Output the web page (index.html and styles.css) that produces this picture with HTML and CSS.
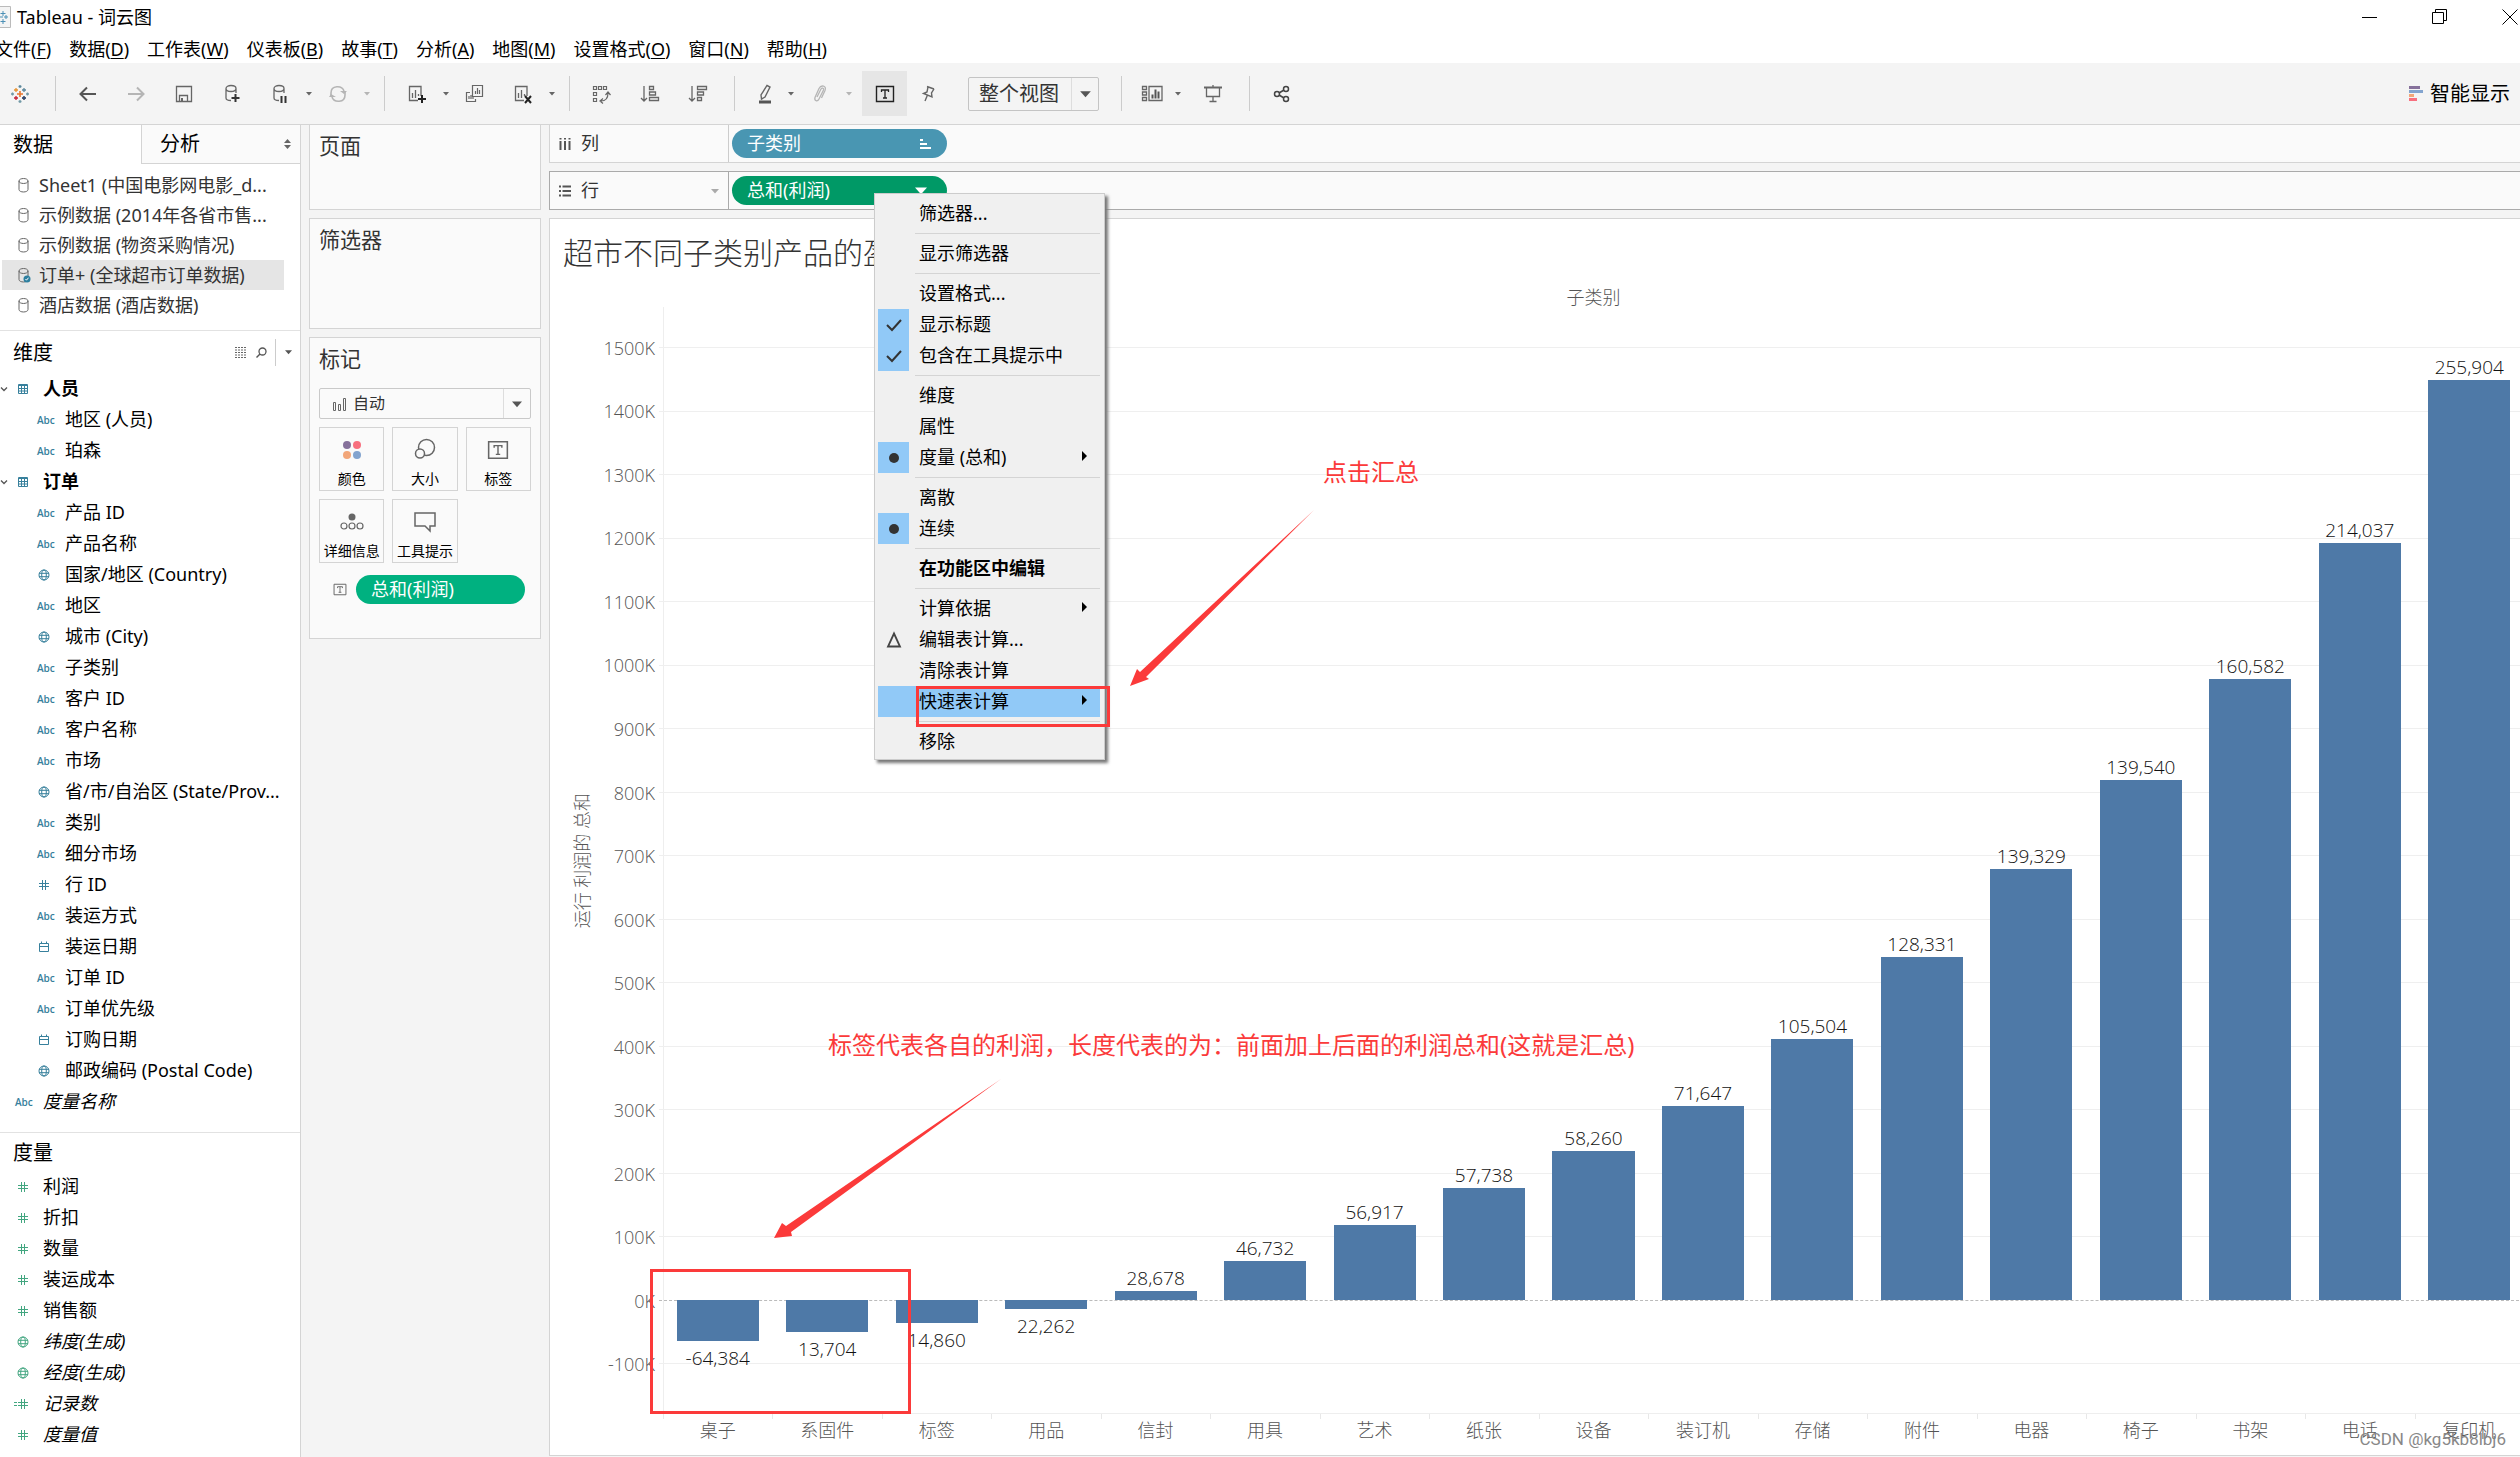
FILE: index.html
```html
<!DOCTYPE html>
<html lang="zh-CN">
<head>
<meta charset="utf-8">
<title>Tableau - 词云图</title>
<link rel="stylesheet" href="styles.css">
</head>
<body>
<svg class="defs" aria-hidden="true">
  <symbol id="db" viewBox="0 0 14 16"><path d="M2 4v8.500c0 3.300 9 3.300 9 0V4M2 4c0-3.300 9-3.300 9 0s-9 3.300-9 0z" fill="none" stroke="#666"/></symbol>
  <symbol id="caret" viewBox="0 0 8 6"><path d="M0 1h8L4 5.500z" fill="currentColor"/></symbol>
  <symbol id="globe" viewBox="0 0 12 12"><g fill="none" stroke="currentColor"><circle cx="6" cy="6" r="5"/><ellipse cx="6" cy="6" rx="2.300" ry="5"/><path d="M1 4.300h10M1 7.700h10"/></g></symbol>
  <symbol id="hash" viewBox="0 0 12 12"><path d="M4.500 1v10M7.500 1v10M1 4.500h10M1 7.500h10" fill="none" stroke="currentColor"/></symbol>
  <symbol id="cal" viewBox="0 0 12 12"><path d="M1.500 2.500h9v8h-9zM1.500 5.500h9M3.500 .500v2M8.500 .500v2" fill="none" stroke="currentColor"/></symbol>
  <symbol id="table" viewBox="0 0 12 12"><path d="M1.500 1.500h9v9h-9zM1.500 2.500h9M1.500 5.500h9M1.500 8h9M4.500 2v8M7.500 2v8" fill="none" stroke="currentColor"/></symbol>
  <symbol id="chev" viewBox="0 0 8 8"><path d="M1 2.500l3 3 3-3" fill="none" stroke="#555" stroke-width="1.300"/></symbol>
  <symbol id="tbox" viewBox="0 0 20 18"><path d="M1.500 1.500h17v15h-17z" fill="none" stroke="currentColor" stroke-width="1.400"/><path d="M6.500 7V5h7v2M10 5v8M8 13h4" fill="none" stroke="currentColor" stroke-width="1.300"/></symbol>
  <symbol id="check" viewBox="0 0 16 14"><path d="M1 7l5 5 9-10" fill="none" stroke="#333" stroke-width="2"/></symbol>
  <symbol id="right" viewBox="0 0 6 10"><path d="M0 0l5 5-5 5z" fill="#000"/></symbol>
  <symbol id="sheet" viewBox="0 0 20 20"><path d="M14 12V2.500H2.500v14H11M5.500 14V9M8.500 14V6M11.500 12v-2" fill="none" stroke="#666" stroke-width="1.300"/></symbol>
</svg>

<header class="titlebar">
  <svg class="appicon" width="20" height="22" viewBox="0 0 20 22"><path d="M0 .5h18.500v21H0" fill="#f4f4f4" stroke="#bbb"/><path d="M11 5v5M8.500 7.500h5M4 11h7M7.500 8v6M14 9v4M12 11h4M11 13v5M8.500 15.500h5" stroke="#4a8fb5" fill="none"/></svg>
  <span class="apptitle">Tableau - 词云图</span>
  <button class="win" aria-label="最小化"><svg width="16" height="16"><path d="M0 8.500h15" stroke="#000"/></svg></button>
  <button class="win" aria-label="还原"><svg width="16" height="16"><path d="M.5 3.500h11v11H.5zM3.500 3.500v-3h11v11h-3" stroke="#000" fill="none"/></svg></button>
  <button class="win" aria-label="关闭"><svg width="16" height="16"><path d="M.5 .5l15 15M15.500 .5l-15 15" stroke="#000"/></svg></button>
</header>

<nav class="menubar">
  <button>文件(<u>F</u>)</button><button>数据(<u>D</u>)</button><button>工作表(<u>W</u>)</button><button>仪表板(<u>B</u>)</button><button>故事(<u>T</u>)</button><button>分析(<u>A</u>)</button><button>地图(<u>M</u>)</button><button>设置格式(<u>O</u>)</button><button>窗口(<u>N</u>)</button><button>帮助(<u>H</u>)</button>
</nav>

<div class="toolbar" role="toolbar">
  <button class="tb logo" aria-label="开始页面"><svg width="18" height="18" viewBox="0 0 18 18" fill="none" stroke-width="1.300"><path d="M9 6v6M6 9h6" stroke="#e8762d" stroke-width="1.600"/><path d="M5 3v4M3 5h4M13 11v4M11 13h4" stroke="#e8912d"/><path d="M5 11v4M3 13h4" stroke="#c72035"/><path d="M13 3v4M11 5h4M9 0v3M7.500 1.500h3" stroke="#5b879b"/><path d="M13 11v4M11 13h4" stroke="#1f457e"/><path d="M9 15v3M7.500 16.500h3M1.500 7.500v3M0 9h3M16.500 7.500v3M15 9h3" stroke="#7199a6"/></svg></button>
  <i class="sep"></i>
  <button class="tb" aria-label="撤消"><svg width="18" height="16"><path d="M17 8H2M8 1.500L1.500 8 8 14.500" fill="none" stroke="#555" stroke-width="2"/></svg></button>
  <button class="tb" aria-label="重做"><svg width="18" height="16"><path d="M1 8h15M10 1.500L16.500 8 10 14.500" fill="none" stroke="#b5b5b5" stroke-width="2"/></svg></button>
  <button class="tb" aria-label="保存"><svg width="18" height="18"><path d="M1.500 1.500h15v15h-15zM4.500 16v-5.500h8V16" fill="none" stroke="#666" stroke-width="1.300"/><path d="M6 13h2v3H6z" fill="#666"/></svg></button>
  <button class="tb" aria-label="新建数据源"><svg width="18" height="20"><path d="M3 4.500v9.500c0 2 2 2.500 5 2.500M3 4.500c0-4 10-4 10 0s-10 4-10 0zM13 4.500V9" fill="none" stroke="#666" stroke-width="1.300"/><path d="M12.500 10v8M8.500 14h8" stroke="#333" stroke-width="2"/></svg></button>
  <button class="tb" aria-label="暂停自动更新"><svg width="18" height="20"><path d="M3 4.500v9.500c0 2 2 2.500 5 2.500M3 4.500c0-4 10-4 10 0s-10 4-10 0zM13 4.500V9" fill="none" stroke="#666" stroke-width="1.300"/><path d="M10.500 12v7M14.500 12v7" stroke="#333" stroke-width="2"/></svg></button>
  <button class="dd" aria-label="更多"><svg><use href="#caret"/></svg></button>
  <button class="tb off" aria-label="运行更新"><svg width="20" height="18"><path d="M3 11V8c0-8 11-8 13-2M17 7v3c0 8-11 8-13 2" fill="none" stroke="#b5b5b5" stroke-width="1.600"/><path d="M12 6h7l-3 3zM1 12h7l-5-3z" fill="#b5b5b5"/></svg></button>
  <button class="dd off" aria-label="更多"><svg><use href="#caret"/></svg></button>
  <i class="sep"></i>
  <button class="tb" aria-label="新建工作表"><svg width="20" height="20"><use href="#sheet"/><path d="M15 11v8M11 15h8" stroke="#222" stroke-width="2"/></svg></button>
  <button class="dd" aria-label="更多"><svg><use href="#caret"/></svg></button>
  <button class="tb" aria-label="复制"><svg width="20" height="20"><path d="M7.500 1.500h10v11h-10zM10.500 10V7M12.500 10V4M14.500 10V6M5 8.500H1.500v9h9V15M4 15v-3M6 15v-4M8 15v-2" fill="none" stroke="#666" stroke-width="1.200"/></svg></button>
  <button class="tb" aria-label="清除工作表"><svg width="20" height="20"><use href="#sheet"/><path d="M12 12l6 7M18 12l-6 7" stroke="#222" stroke-width="2"/></svg></button>
  <button class="dd" aria-label="更多"><svg><use href="#caret"/></svg></button>
  <i class="sep"></i>
  <button class="tb" aria-label="交换行和列"><svg width="20" height="20"><path d="M1.500 2.500h3v3h-3zM6.500 2.500h3v3h-3zM11.500 2.500h3v3h-3zM1.500 8.500h3v3h-3zM1.500 14.500h3v3h-3zM9 17c5 0 7-3 7-8M13.500 11L16 8l2.500 3M11 14.500L8 17l3 2.500" fill="none" stroke="#666" stroke-width="1.200"/></svg></button>
  <button class="tb" aria-label="升序排序"><svg width="20" height="18"><path d="M4 1v15M1 13l3 3 3-3M9.500 1.500h4v3h-4zM9.500 7h6v3h-6zM9.500 12.500h9v3h-9z" fill="none" stroke="#666" stroke-width="1.300"/></svg></button>
  <button class="tb" aria-label="降序排序"><svg width="20" height="18"><path d="M4 1v15M1 13l3 3 3-3M9.500 1.500h9v3h-9zM9.500 7h6v3h-6zM9.500 12.500h4v3h-4z" fill="none" stroke="#666" stroke-width="1.300"/></svg></button>
  <i class="sep"></i>
  <button class="tb narrow" aria-label="突出显示"><svg width="16" height="20"><path d="M10 1.500l3 1.500-5 10-3.500 2L4 11z" fill="none" stroke="#666" stroke-width="1.400"/><path d="M2 18h12" stroke="#555" stroke-width="3"/></svg></button>
  <button class="dd" aria-label="更多"><svg><use href="#caret"/></svg></button>
  <button class="tb" aria-label="组成员"><svg width="16" height="18"><path d="M5 12l4-8c1-1.500 3-1 2.500 1L7 14c-1.500 3-5 2-4-1.500L7 3.500c2-4 8-3 6 2L9.500 13" fill="none" stroke="#b5b5b5" stroke-width="1.300"/></svg></button>
  <button class="dd off" aria-label="更多"><svg><use href="#caret"/></svg></button>
  <button class="tb on" aria-label="显示标记标签"><svg width="20" height="18"><use href="#tbox"/></svg></button>
  <button class="tb narrow" aria-label="固定轴"><svg width="16" height="18"><path d="M6 1.500l7 2.500M7 2l-1 5-3.500 1.500L11 12l-.5-4L13 4M6.500 10L4 16" fill="none" stroke="#666" stroke-width="1.400"/></svg></button>
  <label class="fit"><select aria-label="适合"><option>整个视图</option></select><span><svg width="11" height="8"><use href="#caret"/></svg></span></label>
  <i class="sep wide"></i>
  <button class="tb narrow" aria-label="显示/隐藏卡"><svg width="22" height="18"><path d="M1.500 1.500h4v3h-4zM1.500 7h4v3h-4zM1.500 12.500h4v3h-4zM8 1.500h13v14H8z" fill="none" stroke="#666" stroke-width="1.300"/><path d="M11.500 13.500v-4M14.500 13.500v-9M17.500 13.500v-7" stroke="#555" stroke-width="2"/></svg></button>
  <button class="dd gap" aria-label="更多"><svg><use href="#caret"/></svg></button>
  <button class="tb" aria-label="演示模式"><svg width="18" height="18"><path d="M2.500 2.500v9h13v-9M9 11.500V16M5.500 16.500h7M9 0v2" fill="none" stroke="#666" stroke-width="1.300"/><path d="M0 2.500h18" stroke="#666" stroke-width="2"/></svg></button>
  <i class="sep"></i>
  <button class="tb" aria-label="共享"><svg width="18" height="18"><g fill="none" stroke="#444" stroke-width="1.500"><circle cx="4" cy="9" r="2.500"/><circle cx="13" cy="4" r="2.500"/><circle cx="13" cy="14" r="2.500"/><path d="M6 8l5-3M6 10l5 3"/></g></svg></button>
  <button class="showme"><svg width="14" height="15"><path d="M0 0h11v3H0z" fill="#86719b"/><path d="M0 4h14v3H0z" fill="#83a4cf"/><path d="M0 8h5v3H0z" fill="#f2a679"/><path d="M0 12h8v3H0z" fill="#f8707f"/></svg>智能显示</button>
</div>

<div class="work">
  <aside class="data">
    <div class="tabs"><button class="tab cur">数据</button><button class="tab">分析<svg width="7" height="10"><path d="M0 4l3.500-4L7 4zM0 6l3.500 4L7 6z" fill="#666"/></svg></button></div>
    <ul class="sources">
      <li><svg><use href="#db"/></svg>Sheet1 (中国电影网电影_d...</li>
      <li><svg><use href="#db"/></svg>示例数据 (2014年各省市售...</li>
      <li><svg><use href="#db"/></svg>示例数据 (物资采购情况)</li>
      <li class="sel"><svg><use href="#db"/><circle cx="10" cy="12" r="3.500" fill="#2d7f9f"/><path d="M8.500 12l1 1.200 2-2.500" fill="none" stroke="#fff"/></svg>订单+ (全球超市订单数据)</li>
      <li><svg><use href="#db"/></svg>酒店数据 (酒店数据)</li>
    </ul>
    <div class="fieldhead">
      <h2>维度</h2>
      <svg width="12" height="11"><path d="M0 .5h12M0 3h12M0 5.500h12M0 8h12M0 10.500h12" stroke="#666" stroke-dasharray="2 1"/></svg>
      <svg width="11" height="11"><circle cx="6.500" cy="4.500" r="3.500" fill="none" stroke="#555" stroke-width="1.300"/><path d="M4 7l-3.500 3.500" stroke="#555" stroke-width="1.500"/></svg>
      <i></i>
      <svg width="7" height="6"><use href="#caret"/></svg>
    </div>
    <ul class="tree dims">
      <li class="group"><svg class="chev"><use href="#chev"/></svg><svg class="ic"><use href="#table"/></svg>人员</li>
      <li class="child"><span class="abc">Abc</span>地区 (人员)</li>
      <li class="child"><span class="abc">Abc</span>珀森</li>
      <li class="group"><svg class="chev"><use href="#chev"/></svg><svg class="ic"><use href="#table"/></svg>订单</li>
      <li class="child"><span class="abc">Abc</span>产品 ID</li>
      <li class="child"><span class="abc">Abc</span>产品名称</li>
      <li class="child"><svg class="ic"><use href="#globe"/></svg>国家/地区 (Country)</li>
      <li class="child"><span class="abc">Abc</span>地区</li>
      <li class="child"><svg class="ic"><use href="#globe"/></svg>城市 (City)</li>
      <li class="child"><span class="abc">Abc</span>子类别</li>
      <li class="child"><span class="abc">Abc</span>客户 ID</li>
      <li class="child"><span class="abc">Abc</span>客户名称</li>
      <li class="child"><span class="abc">Abc</span>市场</li>
      <li class="child"><svg class="ic"><use href="#globe"/></svg>省/市/自治区 (State/Prov...</li>
      <li class="child"><span class="abc">Abc</span>类别</li>
      <li class="child"><span class="abc">Abc</span>细分市场</li>
      <li class="child"><svg class="ic"><use href="#hash"/></svg>行 ID</li>
      <li class="child"><span class="abc">Abc</span>装运方式</li>
      <li class="child"><svg class="ic"><use href="#cal"/></svg>装运日期</li>
      <li class="child"><span class="abc">Abc</span>订单 ID</li>
      <li class="child"><span class="abc">Abc</span>订单优先级</li>
      <li class="child"><svg class="ic"><use href="#cal"/></svg>订购日期</li>
      <li class="child"><svg class="ic"><use href="#globe"/></svg>邮政编码 (Postal Code)</li>
      <li class="gen"><span class="abc">Abc</span>度量名称</li>
    </ul>
    <div class="fieldhead meas"><h2>度量</h2></div>
    <ul class="tree green">
      <li><svg class="ic"><use href="#hash"/></svg>利润</li>
      <li><svg class="ic"><use href="#hash"/></svg>折扣</li>
      <li><svg class="ic"><use href="#hash"/></svg>数量</li>
      <li><svg class="ic"><use href="#hash"/></svg>装运成本</li>
      <li><svg class="ic"><use href="#hash"/></svg>销售额</li>
      <li class="gen"><svg class="ic"><use href="#globe"/></svg>纬度(生成)</li>
      <li class="gen"><svg class="ic"><use href="#globe"/></svg>经度(生成)</li>
      <li class="gen"><svg class="ic"><path d="M-3 4.500h3M-3 7.500h3" stroke="currentColor"/><use href="#hash"/></svg>记录数</li>
      <li class="gen"><svg class="ic"><use href="#hash"/></svg>度量值</li>
    </ul>
  </aside>

  <section class="cards">
    <div class="card pages"><h3>页面</h3></div>
    <div class="card filters"><h3>筛选器</h3></div>
    <div class="card marks">
      <h3>标记</h3>
      <label class="marktype"><svg width="14" height="14"><path d="M.5 5.500h2v8h-2zM5.500 7.500h2v6h-2zM10.500 1.500h2v12h-2z" fill="none" stroke="#666"/></svg><select aria-label="标记类型"><option>自动</option></select><span><svg width="10" height="8"><use href="#caret"/></svg></span></label>
      <div class="props">
        <button><svg width="20" height="20"><circle cx="5" cy="5" r="4" fill="#86719b"/><circle cx="15" cy="5" r="4" fill="#f8707f"/><circle cx="5" cy="15" r="4" fill="#f2a679"/><circle cx="15" cy="15" r="4" fill="#83a4cf"/></svg>颜色</button>
        <button><svg width="22" height="22"><g stroke="#666" stroke-width="1.500"><circle cx="12.500" cy="9.500" r="8" fill="none"/><circle cx="6" cy="15.500" r="4.500" fill="#fafafa"/></g></svg>大小</button>
        <button><svg width="22" height="20"><use href="#tbox"/></svg>标签</button>
        <button><svg width="24" height="20"><circle cx="12" cy="5" r="3.500" fill="#666"/><g fill="none" stroke="#666" stroke-width="1.200"><circle cx="4" cy="14" r="3"/><circle cx="12" cy="14" r="3"/><circle cx="20" cy="14" r="3"/></g></svg>详细信息</button>
        <button><svg width="22" height="20"><path d="M1 1h20v13h-5v5l-5-5H1z" fill="none" stroke="#666" stroke-width="1.500"/></svg>工具提示</button>
      </div>
      <div class="markpill"><svg width="14" height="13"><use href="#tbox"/></svg><button class="pill label">总和(利润)</button></div>
    </div>
  </section>

  <main class="view">
    <div class="shelf">
      <div class="shelfname"><svg width="12" height="14"><path d="M1.500 1v1.500M6 1v1.500M10.500 1v1.500M1.500 4v9M6 4v9M10.500 4v9" stroke="#555" stroke-width="2"/></svg>列</div>
      <button class="pill blue">子类别<svg width="12" height="10"><path d="M1 0v2M0 1h3M0 5h7M0 9h11" stroke="#fff" stroke-width="2"/></svg></button>
    </div>
    <div class="shelf active">
      <div class="shelfname"><svg width="12" height="12"><path d="M0 1.500h2M3.500 1.500H12M0 6h2M3.500 6H12M0 10.500h2M3.500 10.500H12" stroke="#555" stroke-width="2"/></svg>行<svg class="more" width="8" height="6"><use href="#caret"/></svg></div>
      <button class="pill green2">总和(利润)<svg width="12" height="9"><use href="#caret"/></svg></button>
    </div>
    <div class="viz">
      <h1>超市不同子类别产品的盈</h1>
      <div class="chart">
        <div class="colhead">子类别</div>
        <div class="ytitle"><span>运行 利润的 总和</span></div>
        <div class="yaxis">
          <div class="top"></div><div>1500K</div><div>1400K</div><div>1300K</div><div>1200K</div><div>1100K</div><div>1000K</div><div>900K</div><div>800K</div><div>700K</div><div>600K</div><div>500K</div><div>400K</div><div>300K</div><div>200K</div><div>100K</div><div>0K</div><div class="bottom">-100K</div>
        </div>
        <div class="lines">
          <div class="top"></div><div></div><div></div><div></div><div></div><div></div><div></div><div></div><div></div><div></div><div></div><div></div><div></div><div></div><div></div><div></div><div class="zero"></div><div class="bottom"></div>
        </div>
        <div class="bars">
          <div class="pad"></div>
          <div class="neg"><i style="height:36%"></i>-64,384</div>
          <div class="neg"><i style="height:28.300%"></i>13,704</div>
          <div class="neg"><i style="height:20%"></i>14,860</div>
          <div class="neg"><i style="height:7.600%"></i>22,262</div>
          <div class="pos">28,678<i style="height:0.966%"></i></div>
          <div class="pos">46,732<i style="height:3.952%"></i></div>
          <div class="pos">56,917<i style="height:7.588%"></i></div>
          <div class="pos">57,738<i style="height:11.277%"></i></div>
          <div class="pos">58,260<i style="height:15%"></i></div>
          <div class="pos">71,647<i style="height:19.577%"></i></div>
          <div class="pos">105,504<i style="height:26.318%"></i></div>
          <div class="pos">128,331<i style="height:34.517%"></i></div>
          <div class="pos">139,329<i style="height:43.418%"></i></div>
          <div class="pos">139,540<i style="height:52.333%"></i></div>
          <div class="pos">160,582<i style="height:62.593%"></i></div>
          <div class="pos">214,037<i style="height:76.267%"></i></div>
          <div class="pos">255,904<i style="height:92.617%"></i></div>
        </div>
        <div class="xaxis"><span>桌子</span><span>系固件</span><span>标签</span><span>用品</span><span>信封</span><span>用具</span><span>艺术</span><span>纸张</span><span>设备</span><span>装订机</span><span>存储</span><span>附件</span><span>电器</span><span>椅子</span><span>书架</span><span>电话</span><span>复印机</span></div>
      </div>
    </div>
  </main>
</div>

<div class="ctx" role="menu">
  <button>筛选器...</button>
  <hr>
  <button>显示筛选器</button>
  <hr>
  <button>设置格式...</button>
  <button><span class="mk"><svg width="16" height="14"><use href="#check"/></svg></span>显示标题</button>
  <button><span class="mk"><svg width="16" height="14"><use href="#check"/></svg></span>包含在工具提示中</button>
  <hr>
  <button>维度</button>
  <button>属性</button>
  <button><span class="mk"><svg width="10" height="10"><circle cx="5" cy="5" r="5" fill="#333"/></svg></span>度量 (总和)<svg class="sub"><use href="#right"/></svg></button>
  <hr>
  <button>离散</button>
  <button><span class="mk"><svg width="10" height="10"><circle cx="5" cy="5" r="5" fill="#333"/></svg></span>连续</button>
  <hr>
  <button class="bold">在功能区中编辑</button>
  <hr>
  <button>计算依据<svg class="sub"><use href="#right"/></svg></button>
  <button><span class="mk plain"><svg width="16" height="16"><path d="M8 1.500l6 13H2z" fill="none" stroke="#444" stroke-width="1.800"/></svg></span>编辑表计算...</button>
  <button>清除表计算</button>
  <button class="hot">快速表计算<svg class="sub"><use href="#right"/></svg></button>
  <hr>
  <button>移除</button>
</div>

<div class="note box1"></div>
<div class="note box2"></div>
<p class="note text1">点击汇总</p>
<p class="note text2">标签代表各自的利润，长度代表的为：前面加上后面的利润总和(这就是汇总)</p>
<svg class="note arrow1" width="186" height="178"><path d="M184 0L16 167l3 2-19 7 7-17 3 3z" fill="#fb3a3a"/></svg>
<svg class="note arrow2" width="228" height="161"><path d="M227 0L17 153l1 4-18 2 8-15 4 3z" fill="#fb3a3a"/></svg>
<div class="watermark">CSDN @kg5kb8lbj6</div>
</body>
</html>
```
FILE: styles.css
```css
* { box-sizing: border-box; }
html, body { margin: 0; height: 100%; }
body {
  position: relative;
  display: flex;
  flex-direction: column;
  overflow: hidden;
  background: #f4f4f4;
  color: #000;
  font: 18px/31px "Noto Sans", "Noto Sans CJK SC", sans-serif;
}
button, select { font: inherit; color: inherit; border: 0; padding: 0; background: none; white-space: nowrap; }
select { appearance: none; outline: 0; }
h1, h2, h3, p, ul { margin: 0; padding: 0; font-weight: 400; list-style: none; }
svg { flex: none; overflow: visible; }
.defs { position: absolute; width: 0; height: 0; }

/* Title and menu bars */
.titlebar { display: flex; align-items: center; height: 34px; background: #fff; }
.appicon { margin-left: -8px; }
.apptitle { flex: 1; padding-left: 5px; }
.win { width: 70px; height: 32px; display: flex; align-items: center; justify-content: center; flex: none; }
.win:last-child { margin-right: -25px; }
.menubar { display: flex; gap: 18px; height: 29px; padding-bottom: 1px; margin-left: -5px; background: #fff; }
.menubar button { line-height: 30px; }
.menubar u { text-underline-offset: 2px; text-decoration-thickness: 1px; }

/* Toolbar */
.toolbar { display: flex; align-items: center; height: 61px; flex: none; color: #666; }
.tb { width: 48px; height: 45px; display: flex; align-items: center; justify-content: center; flex: none; }
.tb.logo { width: 40px; }
.tb.narrow { width: 43px; }
.tb.on { width: 45px; margin-left: 8px; background: #e6e6e6; color: #222; }
.dd { width: 10px; height: 45px; display: flex; align-items: center; justify-content: center; flex: none; }
.dd svg { width: 6px; height: 5px; }
.dd.off { color: #b5b5b5; }
.dd.gap { margin-right: 6px; }
.sep { width: 1px; height: 35px; background: #ccc; margin: 0 8px 0 12px; flex: none; }
.logo + .sep { margin-left: 15px; }
.sep.wide { margin-left: 22px; }
.fit { display: flex; width: 131px; height: 34px; margin-left: 18px; border: 1px solid #c4c4c4; border-radius: 2px; font-size: 20px; color: #333; flex: none; }
.fit select { flex: 1; min-width: 0; padding-left: 10px; }
.fit span, .marktype span { width: 27px; border-left: 1px solid #ddd; display: flex; align-items: center; justify-content: center; color: #555; }
.showme { display: flex; align-items: center; gap: 7px; margin-left: auto; padding-right: 10px; font-size: 20px; color: #000; }

/* Workspace */
.work { flex: 1; min-height: 0; display: flex; gap: 8px; border-top: 1px solid #d4d4d4; }
.data { width: 301px; flex: none; background: #fff; border-right: 1px solid #d4d4d4; overflow: hidden; }
.tabs { display: flex; height: 39px; }
.tab { width: 141px; text-align: left; padding-left: 13px; font-size: 20px; line-height: 38px; }
.tab + .tab { flex: 1; display: flex; align-items: center; justify-content: space-between; padding: 0 9px 0 18px; background: #fafafa; border: solid #d4d4d4; border-width: 0 0 1px 1px; }
.sources { padding: 6px 16px 10px 2px; color: #333; line-height: 30px; }
.sources li { display: flex; align-items: center; gap: 8px; padding-left: 15px; height: 30px; white-space: nowrap; }
.sources svg { width: 14px; height: 16px; }
.sources .sel { background: #e5e5e5; }
.fieldhead { display: flex; align-items: center; height: 43px; border-top: 1px solid #e2e2e2; padding: 0 8px 0 13px; color: #555; }
.fieldhead h2 { flex: 1; font-size: 20px; color: #000; }
.fieldhead svg + svg { margin-left: 9px; }
.fieldhead i { width: 1px; height: 27px; background: #ccc; margin: 0 9px 0 8px; }
.fieldhead.meas { height: 39px; }
.tree { color: #000; }
.tree li { display: flex; align-items: center; height: 31px; padding-left: 17px; white-space: nowrap; }
.tree .child { padding-left: 37px; }
.tree .ic { width: 12px; height: 12px; margin-right: 14px; color: #37809c; }
.tree .child .ic { margin: 0 15px 0 1px; }
.tree.green .ic { color: #42a680; }
.tree .group { font-weight: 700; padding-left: 0; }
.chev { width: 8px; height: 8px; margin-right: 9px; }
.abc { width: 28px; color: #37809c; font: 600 10px/12px "Open Sans", sans-serif; }
.tree > .gen { font-style: italic; }
.tree > .gen .abc { font-style: normal; margin-left: -2px; }
.dims { padding-bottom: 15px; }

/* Cards */
.cards { width: 232px; flex: none; display: flex; flex-direction: column; gap: 8px; }
.card { background: #fafafa; border: 1px solid #d4d4d4; padding: 5px 9px; margin-top: -1px; }
.card + .card { margin-top: 0; }
.card h3 { color: #333; }
.pages { height: 86px; }
.filters { height: 111px; }
.marks { padding-bottom: 34px; }
.marktype { display: flex; align-items: center; height: 31px; margin-top: 14px; border: 1px solid #c9c9c9; border-radius: 2px; font-size: 16px; color: #333; padding-left: 13px; }
.marktype select { flex: 1; padding-left: 6px; }
.marktype span { align-self: stretch; }
.props { display: grid; grid-template-columns: repeat(3, 1fr); gap: 8px; margin-top: 8px; }
.props button { height: 64px; border: 1px solid #d4d4d4; display: flex; flex-direction: column; align-items: center; justify-content: flex-end; gap: 9px; padding-bottom: 1px; font-size: 14px; line-height: 20px; color: #000; }
.props svg { color: #666; }
.markpill { display: flex; align-items: center; gap: 9px; padding: 12px 6px 0 14px; color: #666; }
.pill { height: 29px; line-height: 29px; border-radius: 15px; color: #fff; text-align: left; padding: 0 15px; display: flex; align-items: center; justify-content: space-between; }
.pill.label { flex: 1; background: #00b180; }

/* Shelves */
.view { flex: 1; min-width: 0; display: flex; flex-direction: column; gap: 8px; padding-bottom: 1px; }
.shelf { display: flex; align-items: center; height: 39px; background: #fafafa; border: 1px solid #d4d4d4; border-right: 0; flex: none; }
.shelf:first-child { margin-top: -1px; }
.shelf.active { border-color: #aaa; }
.shelfname { display: flex; align-items: center; gap: 10px; width: 179px; align-self: stretch; padding: 0 9px; border-right: 1px solid #ccc; color: #333; }
.shelf.active .shelfname { border-color: #aaa; }
.more { margin-left: auto; color: #aaa; }
.shelf .pill { width: 215px; margin-left: 3px; }
.blue { background: #4996b2; }
.green2 { background: #009966; padding-right: 20px; }

/* Chart */
.viz { flex: 1; min-height: 0; display: flex; flex-direction: column; background: #fff; border: 1px solid #d4d4d4; border-right: 0; padding-bottom: 7px; }
.viz h1 { font-size: 30px; line-height: 68px; padding-left: 13px; color: #333; font-weight: 300; }
.chart { flex: 1; min-height: 0; margin-right: -4px; display: grid; grid-template: 20px minmax(0, 1fr) 34px / 47px 66px minmax(0, 1fr); color: #555; font-weight: 300; }
.colhead { grid-area: 1 / 3; text-align: center; line-height: 20px; }
.ytitle { grid-area: 2 / 1; display: flex; align-items: center; padding-left: 17px; }
.ytitle span { writing-mode: vertical-rl; text-orientation: sideways; transform: rotate(180deg); line-height: 30px; }
.yaxis, .lines { display: flex; flex-direction: column; }
.yaxis { grid-area: 2 / 2; font-family: "Open Sans", sans-serif; text-align: right; line-height: 0; padding-right: 8px; }
.yaxis div, .lines div { flex: 64 0 0; min-height: 0; }
.yaxis .top, .lines .top { flex-grow: 41; }
.yaxis .bottom, .lines .bottom { flex-grow: 50; }
.lines { grid-area: 2 / 3; border-left: 1px solid #eee; border-bottom: 1px solid #eee; }
.lines div { border-top: 1px solid #efefef; margin-left: -5px; }
.lines .top { border: 0; }
.lines .zero { border-top: 1px dashed #bbb; }
.bars { grid-area: 2 / 3; display: grid; grid-template-columns: repeat(17, minmax(0, 1fr)); grid-template-rows: 994fr 114fr; position: relative; color: #111; font: 300 19px/26px "Open Sans", sans-serif; }
.bars div { display: flex; flex-direction: column; align-items: center; min-height: 0; }
.bars i { width: 75%; background: #4e79a7; flex: none; }
.bars .pad { grid-row: 1; grid-column: span 4; }
.pos { grid-row: 1; justify-content: flex-end; }
.neg { grid-row: 2; }
.neg i { margin-bottom: 4px; }
.xaxis { grid-area: 3 / 3; display: grid; grid-template-columns: repeat(17, minmax(0, 1fr)); text-align: center; line-height: 33px; background: repeating-linear-gradient(90deg, #e8e8e8 0 1px, transparent 1px calc(100% / 17)) top / 100% 5px no-repeat; }

/* Context menu */
.ctx { position: absolute; left: 874px; top: 193px; width: 231px; padding: 4px 4px 2px 3px; background: #f0f0f0; border: 1px solid #ccc; box-shadow: 3px 3px 3px #777; }
.ctx button { display: flex; align-items: center; width: 100%; height: 31px; padding-left: 41px; }
.ctx hr { height: 1px; margin: 4px 0 4px 37px; border: 0; background: #d4d4d4; }
.mk { width: 31px; height: 31px; margin: 0 10px 0 -41px; background: #91c9f7; display: flex; align-items: center; justify-content: center; }
.mk.plain { background: none; }
.sub { width: 6px; height: 10px; margin: 0 12px 4px auto; }
.ctx .hot { background: #91c9f7; }
.bold { font-weight: 700; }

/* Annotations over the workbook */
.note { position: absolute; color: #fb3a3a; font-size: 24px; line-height: 36px; white-space: nowrap; }
.box1 { left: 916px; top: 686px; width: 194px; height: 41px; border: 3px solid; }
.box2 { left: 650px; top: 1269px; width: 261px; height: 145px; border: 3px solid; }
.text1 { left: 1323px; top: 454px; }
.text2 { left: 828px; top: 1027px; }
.arrow1 { left: 1130px; top: 510px; }
.arrow2 { left: 774px; top: 1079px; }
.watermark { position: absolute; right: 14px; bottom: 5px; font: 17px/26px Roboto, sans-serif; color: #888; }
```
